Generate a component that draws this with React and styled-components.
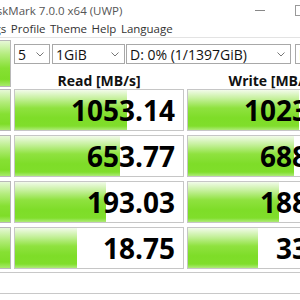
import { Fragment } from "react";
import styled, { createGlobalStyle } from "styled-components";

const GlobalStyle = createGlobalStyle`
  html, body {
    margin: 0;
    padding: 0;
    background: #ffffff;
    overflow: hidden;
  }
  body {
    font-family: "Open Sans", "Noto Sans", sans-serif;
  }
`;

const results = [
  { read: "1053.14", readBar: 112, write: "1023.47", writeBar: 111 },
  { read: "653.77", readBar: 105, write: "688.21", writeBar: 106 },
  { read: "193.03", readBar: 91, write: "188.65", writeBar: 91 },
  { read: "18.75", readBar: 62, write: "33.41", writeBar: 70 },
];

const Window = styled.div`
  width: 450px;
  margin-left: -90px;
  background: #fff;
`;

const TitleBar = styled.div`
  height: 20px;
  display: flex;
  align-items: center;
  padding-left: 39px;
  font-size: 11.5px;
  color: #555;
`;

const Title = styled.span`
  flex: 1;
  white-space: nowrap;
`;

const Caption = styled.div`
  width: 40px;
  height: 20px;
  display: flex;
  align-items: center;
  justify-content: center;
`;

const Dash = styled.div`
  width: 10px;
  height: 1px;
  background: #888;
`;

const Square = styled.div`
  width: 9px;
  height: 9px;
  border: 1px solid #999;
`;

const MenuBar = styled.div`
  height: 17px;
  display: flex;
  align-items: center;
  gap: 4.5px;
  padding-left: 31px;
  font-size: 11.5px;
  color: #333;
  border-bottom: 1px solid #e3e3e3;
`;

const MenuItem = styled.span`
  white-space: nowrap;
`;

const Top = styled.div`
  display: flex;
  gap: 3px;
  padding-left: 10px;
  margin-top: 2px;
`;

const GreenButton = styled.div`
  width: 89px;
  height: ${(p) => p.$h}px;
  border: 1px solid #b8b8b8;
  background: linear-gradient(to bottom, #e6f8d6 0%, #b3ec7c 30%, #86e033 60%, #7edd28 85%, #a8eb6c 100%);
`;

const Side = styled.div`
  display: flex;
  flex-direction: column;
  padding-top: 4px;
`;

const Controls = styled.div`
  display: flex;
  height: 20px;
`;

const Select = styled.div`
  width: ${(p) => p.$w}px;
  margin-right: ${(p) => p.$gap}px;
  box-sizing: border-box;
  height: 20px;
  border: 1px solid #a8a8a8;
  display: flex;
  align-items: center;
  padding: 0 5px 0 3px;
  font-size: 14px;
  color: #111;
  white-space: nowrap;
  overflow: hidden;
`;

const SelectText = styled.span`
  flex: 1;
`;

const Header = styled.div`
  display: flex;
  gap: 3px;
  height: 25px;
`;

const HeaderCell = styled.div`
  width: 170px;
  text-align: center;
  font-size: 14px;
  font-weight: 700;
  color: #111;
  padding-top: 7px;
  box-sizing: border-box;
  white-space: nowrap;
`;

const Results = styled.div`
  display: grid;
  grid-template-columns: 91px 170px 170px;
  grid-auto-rows: 42px;
  column-gap: 3px;
  row-gap: 4px;
  padding-left: 10px;
`;

const RowButton = styled(GreenButton)`
  height: auto;
  width: auto;
`;

const Cell = styled.div`
  position: relative;
  border: 1px solid #c6c6c6;
  display: flex;
  align-items: center;
  justify-content: flex-end;
  padding-right: 8px;
  overflow: hidden;
`;

const Bar = styled.div`
  position: absolute;
  left: 0;
  top: 0;
  bottom: 0;
  background: linear-gradient(to bottom, #f2fbea 0%, #c4f09a 22%, #8fe23f 45%, #7edd28 70%, #80de2b 90%, #aeeb78 100%);
`;

const Value = styled.span`
  position: relative;
  font-size: 28px;
  font-weight: 700;
  color: #000;
`;

const Comment = styled.div`
  margin: 3px 0 0 10px;
  height: 20px;
  border-top: 1px solid #c8c8c8;
  border-bottom: 1px solid #c8c8c8;
`;

function Chevron() {
  return (
    <svg width="8" height="5" viewBox="0 0 8 5">
      <path d="M0.5 0.5 L4 4 L7.5 0.5" fill="none" stroke="#777" strokeWidth="1" />
    </svg>
  );
}

export default function App() {
  return (
    <>
      <GlobalStyle />
      <Window>
        <TitleBar>
          <Title>CrystalDiskMark 7.0.0 x64 (UWP)</Title>
          <Caption><Dash /></Caption>
          <Caption><Square /></Caption>
          <Caption />
        </TitleBar>
        <MenuBar>
          <MenuItem>File</MenuItem>
          <MenuItem>Settings</MenuItem>
          <MenuItem>Profile</MenuItem>
          <MenuItem>Theme</MenuItem>
          <MenuItem>Help</MenuItem>
          <MenuItem>Language</MenuItem>
        </MenuBar>
        <Top>
          <GreenButton $h={45} />
          <Side>
            <Controls>
              <Select $w={36} $gap={2}><SelectText>5</SelectText><Chevron /></Select>
              <Select $w={73} $gap={1}><SelectText>1GiB</SelectText><Chevron /></Select>
              <Select $w={165} $gap={4}><SelectText>D: 0% (1/1397GiB)</SelectText><Chevron /></Select>
              <Select $w={60} $gap={0}><SelectText>MB/s</SelectText><Chevron /></Select>
            </Controls>
            <Header>
              <HeaderCell>Read [MB/s]</HeaderCell>
              <HeaderCell>Write [MB/s]</HeaderCell>
            </Header>
          </Side>
        </Top>
        <Results>
          {results.map((r, i) => (
            <Fragment key={i}>
              <RowButton />
              <Cell>
                <Bar style={{ width: r.readBar }} />
                <Value>{r.read}</Value>
              </Cell>
              <Cell>
                <Bar style={{ width: r.writeBar }} />
                <Value>{r.write}</Value>
              </Cell>
            </Fragment>
          ))}
        </Results>
        <Comment />
      </Window>
    </>
  );
}
